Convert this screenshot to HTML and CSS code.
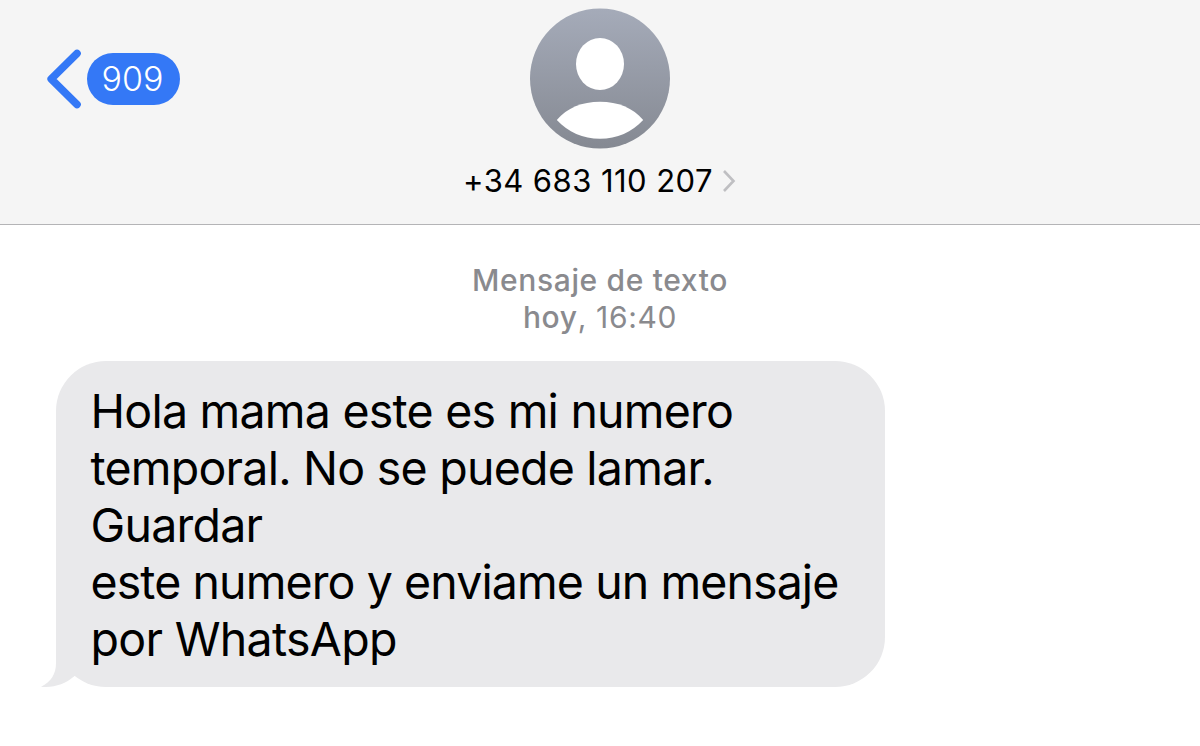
FILE: index.html
```html
<!DOCTYPE html>
<html lang="es">
<head>
  <meta charset="UTF-8">
  <title>Mensajes</title>
  <link rel="stylesheet" href="styles.css">
</head>
<body>

  <header class="header">
    <div class="back">
      <svg class="back-arrow" width="36" height="60" viewBox="0 0 36 60">
        <path d="M31 4.5 L5.2 30 L31 55.5" />
      </svg>
      <span class="count">909</span>
    </div>

    <div class="contact">
      <svg class="avatar" width="140" height="141" viewBox="0 0 140 141">
        <defs>
          <linearGradient id="avatarFill" x1="0" y1="0" x2="0" y2="1">
            <stop offset="0" stop-color="#a5abb9" />
            <stop offset="1" stop-color="#858992" />
          </linearGradient>
        </defs>
        <circle cx="70" cy="70.5" r="70" fill="url(#avatarFill)" />
        <ellipse cx="70" cy="56" rx="24" ry="26" fill="#fff" />
        <path d="M26.8 112 C37 100 52 93.8 70 93.8 C88 93.8 103 100 113.2 112 C102 124 87 130.8 70 130.8 C53 130.8 38 124 26.8 112 Z" fill="#fff" />
      </svg>
      <div class="phone">
        <span class="number">+34 683 110 207</span>
        <svg width="14" height="24" viewBox="0 0 14 24">
          <path d="M2 2 L11.5 12 L2 22" />
        </svg>
      </div>
    </div>
  </header>

  <main class="chat">
    <div class="stamp">
      <p class="kind">Mensaje de texto</p>
      <p class="time"><b>hoy</b>, 16:40</p>
    </div>

    <div class="bubble">
      <p>Hola mama este es mi numero</p>
      <p>temporal. No se puede lamar.</p>
      <p>Guardar</p>
      <p class="tight">este numero y enviame un mensaje</p>
      <p class="loose">por WhatsApp</p>
      <svg class="tail" width="50" height="50" viewBox="0 0 50 50">
        <path d="M15 0 L15 26 C15 37 10 45 0 49.7 C13 51 24 47 33 39.5 L50 20 L50 0 Z" />
      </svg>
    </div>
  </main>

</body>
</html>
```

FILE: styles.css
```css
* {
  margin: 0;
  padding: 0;
  box-sizing: border-box;
}

body {
  font-family: Inter, 'Liberation Sans', sans-serif;
  background: #fff;
  color: #000;
  height: 746px;
  overflow: hidden;
}

.header {
  display: grid;
  grid-template-columns: 1fr 300px 1fr;
  height: 225px;
  background: #f5f5f5;
  border-bottom: 1px solid #b4b4b6;
}

.back {
  display: flex;
  align-items: center;
  gap: 5px;
  height: 60px;
  margin: 49px 0 0 46px;
}

.back-arrow path {
  fill: none;
  stroke: #3478f6;
  stroke-width: 7.6;
  stroke-linecap: round;
  stroke-linejoin: round;
}

.count {
  width: 93px;
  height: 52px;
  padding-right: 2px;
  border-radius: 26px;
  background: #3478f6;
  color: #fff;
  font-size: 34px;
  font-weight: 350;
  line-height: 52px;
  text-align: center;
}

.contact {
  display: flex;
  flex-direction: column;
  align-items: center;
  padding-top: 8px;
}

.phone {
  display: flex;
  align-items: center;
  gap: 9px;
  height: 40px;
  margin-top: 11px;
  padding-right: 1px;
  white-space: nowrap;
}

.number {
  font-size: 31px;
  letter-spacing: 0.45px;
}

.phone svg {
  position: relative;
  top: 1px;
}

.phone path {
  fill: none;
  stroke: #bfbfc2;
  stroke-width: 2.6;
}

.chat {
  padding: 37px 56px 0;
}

.stamp {
  font-size: 30px;
  line-height: 37px;
  letter-spacing: 0.65px;
  text-align: center;
  color: #8a8a8e;
}

.kind {
  font-weight: 500;
}

.time b {
  font-weight: 500;
}

.bubble {
  position: relative;
  width: 829px;
  height: 326px;
  margin-top: 25px;
  padding: 22px 34.5px;
  border-radius: 50px;
  background: #e9e9eb;
  font-size: 46.5px;
  line-height: 57px;
  letter-spacing: -0.77px;
  white-space: nowrap;
}

.tight {
  letter-spacing: -0.91px;
}

.loose {
  letter-spacing: -0.7px;
}

/* sticks out under the bottom left corner */
.tail {
  position: absolute;
  left: -15px;
  bottom: 0;
}

.tail path {
  fill: #e9e9eb;
}
```
